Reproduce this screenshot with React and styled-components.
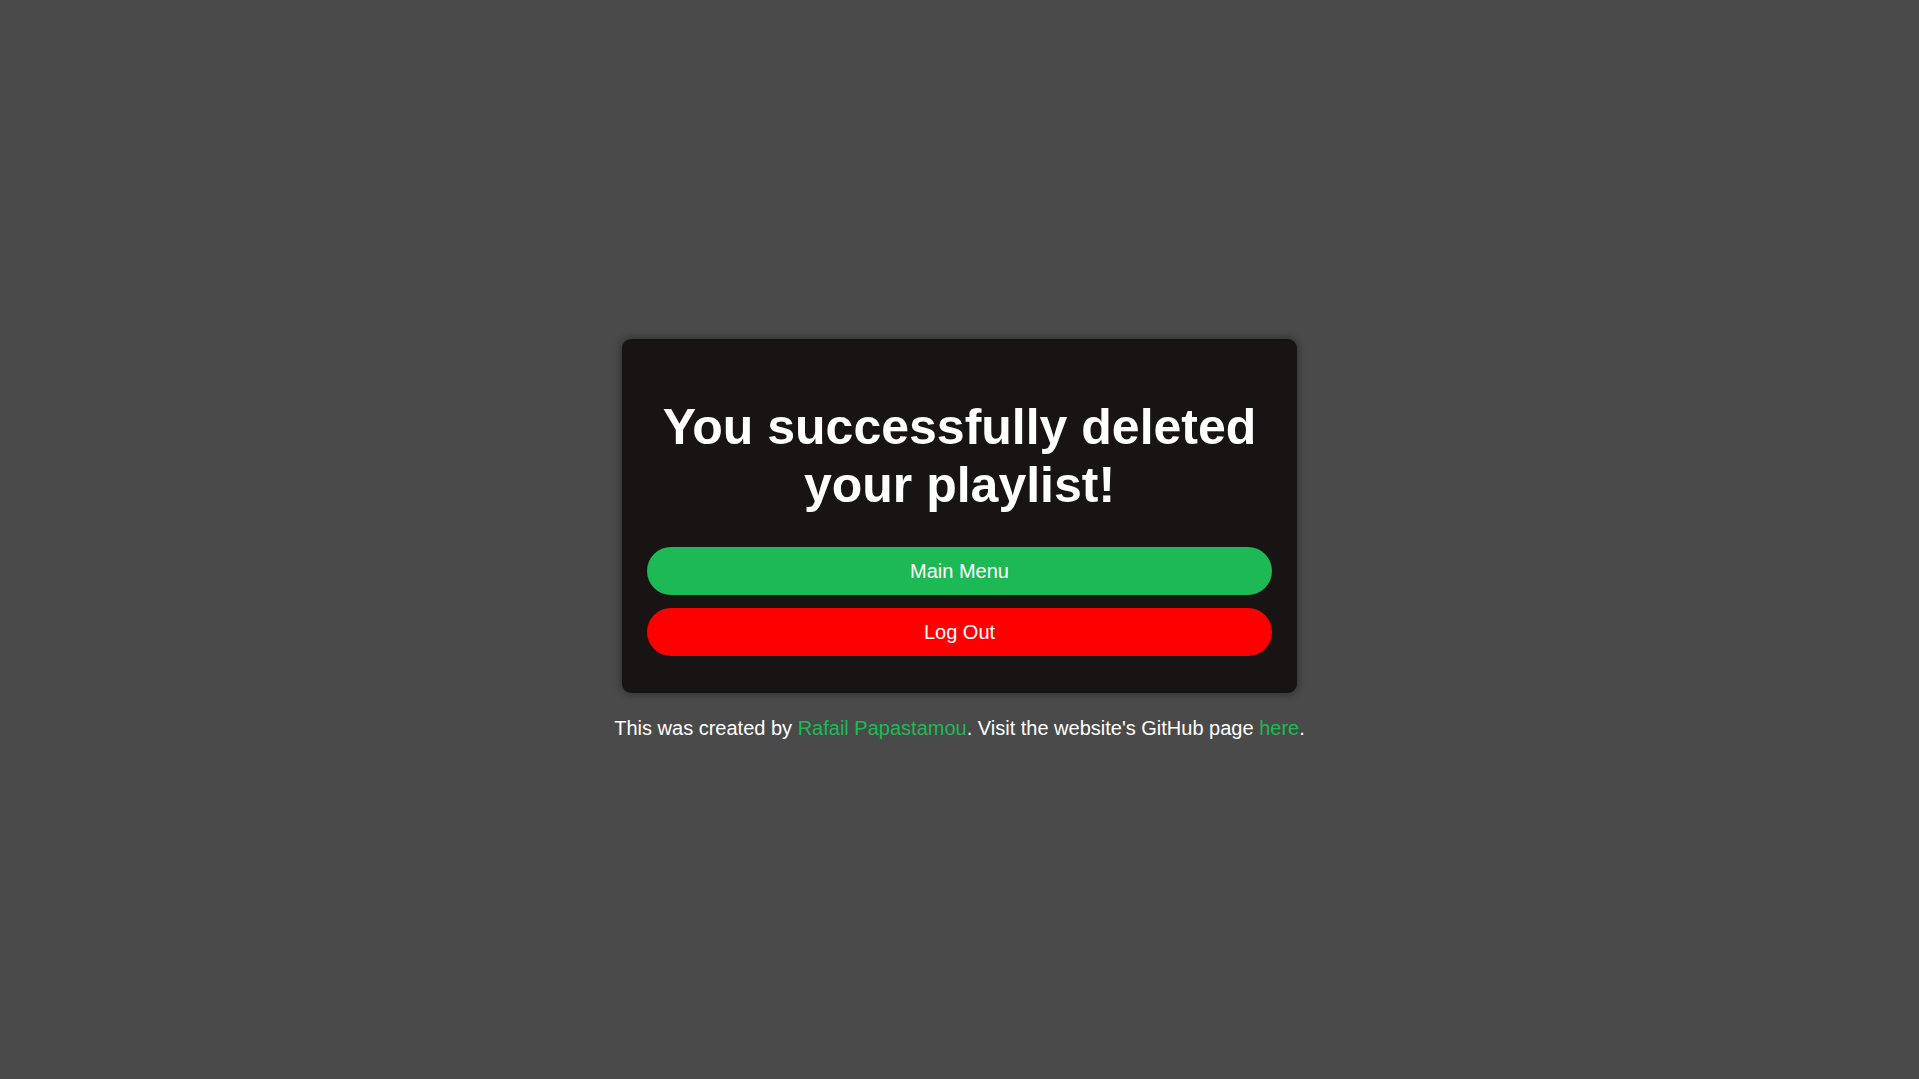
import React from "react";
import styled, { createGlobalStyle } from "styled-components";

const GlobalStyle = createGlobalStyle`
  html, body {
    margin: 0;
    padding: 0;
    background: #4a4a4a;
    font-family: "Liberation Sans", Arial, sans-serif;
    color: #ffffff;
  }
`;

const Page = styled.main`
  min-height: 100vh;
  display: flex;
  flex-direction: column;
  align-items: center;
  justify-content: center;
  gap: 24px;
`;

const Card = styled.section`
  width: 675px;
  box-sizing: border-box;
  padding: 25px 25px 37px;
  background: #191414;
  border-radius: 9px;
  box-shadow: 0 0 10px rgba(0, 0, 0, 0.45);
  display: flex;
  flex-direction: column;
`;

const Title = styled.h1`
  margin: 34px 0 33px;
  font-size: 50px;
  font-weight: 700;
  line-height: normal;
  text-align: center;
  color: #ffffff;
`;

const Actions = styled.div`
  display: flex;
  flex-direction: column;
  gap: 13px;
`;

const PillButton = styled.button`
  height: 48px;
  width: 100%;
  border: none;
  border-radius: 24px;
  background: ${(p) => p.$bg};
  color: #ffffff;
  font-family: "Liberation Sans", Arial, sans-serif;
  font-size: 20px;
  cursor: pointer;
  padding: 0;
`;

const Footer = styled.p`
  margin: 0;
  font-size: 20px;
  line-height: normal;
  color: #ffffff;
  text-align: center;
`;

const Link = styled.a`
  color: #1db954;
  text-decoration: none;
`;

export default function App() {
  return (
    <>
      <GlobalStyle />
      <Page>
        <Card>
          <Title>
            You successfully deleted
            <br />
            your playlist!
          </Title>
          <Actions>
            <PillButton $bg="#1db954">Main Menu</PillButton>
            <PillButton $bg="#ff0000">Log Out</PillButton>
          </Actions>
        </Card>
        <Footer>
          This was created by <Link href="#">Rafail Papastamou</Link>. Visit the
          website's GitHub page <Link href="#">here</Link>.
        </Footer>
      </Page>
    </>
  );
}
